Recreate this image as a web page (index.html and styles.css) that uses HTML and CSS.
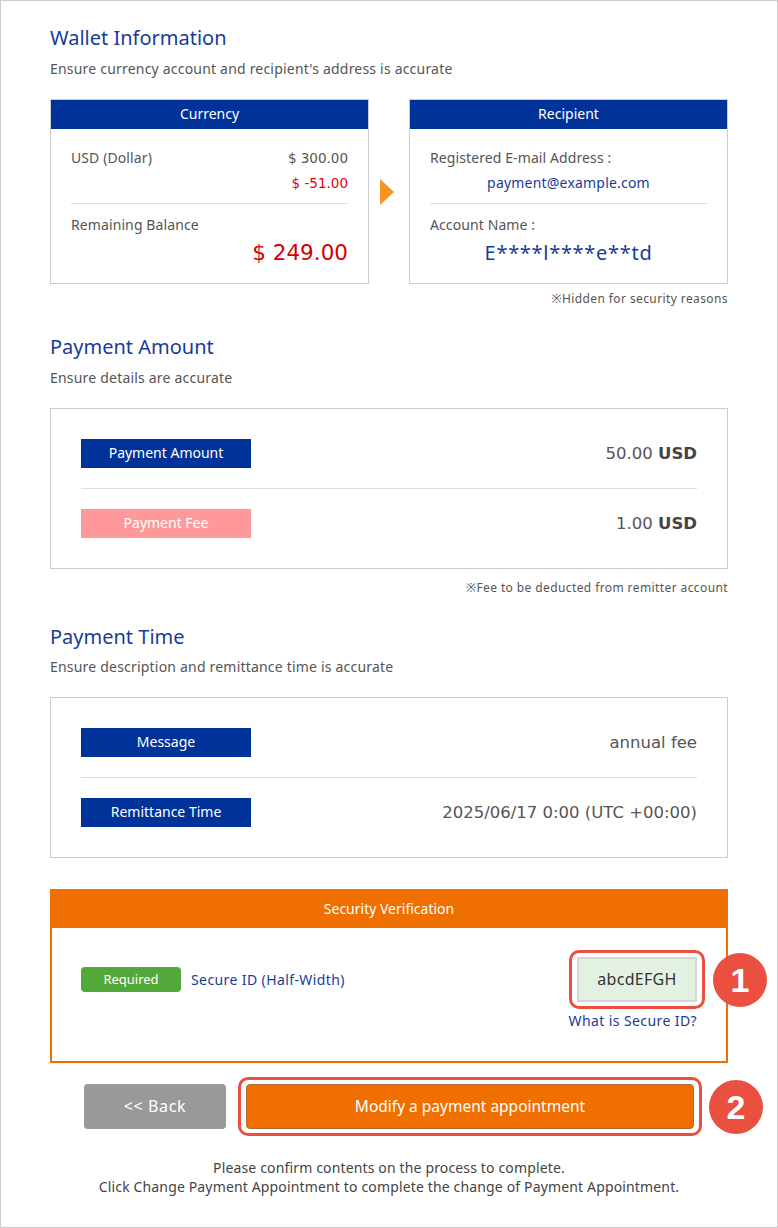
FILE: index.html
```html
<!DOCTYPE html>
<html>
<head>
<meta charset="utf-8">
<title>Payment confirmation</title>
<link rel="stylesheet" href="styles.css">
</head>
<body>
<div class="page">

	<h2 class="title">Wallet Information</h2>
	<p class="lead">Ensure currency account and recipient's address is accurate</p>
	<div class="wallet">
		<div class="card">
			<div class="card-head">Currency</div>
			<div class="card-body">
				<div class="line"><span>USD (Dollar)</span><span class="num-text">$ 300.00</span></div>
				<div class="line minus"><span></span><span class="num-text">$ -51.00</span></div>
				<div class="sep"></div>
				<div class="label">Remaining Balance</div>
				<div class="balance num-text">$ 249.00</div>
			</div>
		</div>
		<div class="arrow"></div>
		<div class="card">
			<div class="card-head">Recipient</div>
			<div class="card-body">
				<div class="label">Registered E-mail Address :</div>
				<div class="mail">payment@example.com</div>
				<div class="sep"></div>
				<div class="label">Account Name :</div>
				<div class="holder">E****l****e**td</div>
			</div>
		</div>
	</div>
	<p class="note note-wallet">※Hidden for security reasons</p>

	<h2 class="title">Payment Amount</h2>
	<p class="lead">Ensure details are accurate</p>
	<div class="box">
		<div class="row"><span class="tag">Payment Amount</span><span class="val">50.00 <b>USD</b></span></div>
		<div class="row"><span class="tag tag-fee">Payment Fee</span><span class="val">1.00 <b>USD</b></span></div>
	</div>
	<p class="note">※Fee to be deducted from remitter account</p>

	<h2 class="title title-time">Payment Time</h2>
	<p class="lead lead-time">Ensure description and remittance time is accurate</p>
	<div class="box">
		<div class="row"><span class="tag">Message</span><span class="val">annual fee</span></div>
		<div class="row"><span class="tag">Remittance Time</span><span class="val">2025/06/17 0:00 (UTC +00:00)</span></div>
	</div>

	<div class="secure">
		<div class="secure-head">Security Verification</div>
		<div class="secure-body">
			<div class="secure-left">
				<span class="required">Required</span>
				<span class="secure-label">Secure ID (Half-Width)</span>
			</div>
			<div class="secure-right">
				<div class="mark">
					<div class="code">abcdEFGH</div>
					<span class="num num-1">1</span>
				</div>
				<a class="help" href="#">What is Secure ID?</a>
			</div>
		</div>
	</div>

	<div class="actions">
		<a class="btn btn-back" href="#">&lt;&lt; Back</a>
		<div class="mark mark-btn">
			<a class="btn btn-go" href="#">Modify a payment appointment</a>
			<span class="num num-2">2</span>
		</div>
	</div>

	<p class="foot">Please confirm contents on the process to complete.<br>Click Change Payment Appointment to complete the change of Payment Appointment.</p>

</div>
</body>
</html>
```
FILE: styles.css
```css
body { margin:0; background:#fff; font-family:"Noto Sans", "Noto Sans CJK JP", sans-serif; color:#555; }
.page { width:778px; height:1228px; box-sizing:border-box; border:1px solid #ccc; padding:23px 49px 0; }
p { margin:0; }
a { text-decoration:none; }

.title { margin:0; font-size:20px; line-height:28px; font-weight:normal; color:#173c98; }
.lead { margin-top:7px; font-size:14px; line-height:20px; color:#555; letter-spacing:0.2px; }
.title-time { margin-top:27px; }
.lead-time { margin-top:6px; }

.wallet { display:flex; align-items:center; margin-top:20px; }
.card { width:319px; box-sizing:border-box; border:1px solid #ccc; }
.card-head { height:29px; line-height:28px; background:#003399; color:#fff; font-size:14px; text-align:center; }
.card-body { padding:19px 20px 16px; font-size:14px; line-height:20px; letter-spacing:0.1px; }
.num-text { font-family:"DejaVu Sans", sans-serif; font-size:13.5px; letter-spacing:0; }
.line { display:flex; justify-content:space-between; }
.minus { margin-top:5px; color:#e60012; }
.sep { margin-top:10px; border-top:1px solid #ddd; }
.sep + .label { margin-top:11px; }
.balance { margin-top:4px; font-size:21.5px; line-height:28px; color:#d40000; text-align:right; }
.mail { margin-top:5px; text-align:center; color:#173c98; letter-spacing:0.2px; }
.holder { margin-top:4px; font-size:20px; line-height:28px; text-align:center; color:#173c98; letter-spacing:0.7px; }
.arrow { flex:1; display:flex; justify-content:center; }
.arrow::before { content:""; border-left:14px solid #f7931e; border-top:13px solid transparent; border-bottom:13px solid transparent; margin-left:-5px; }

.note { font-size:12px; line-height:16px; text-align:right; color:#555; margin-top:11px; letter-spacing:0.4px; }
.note-wallet { margin-top:7px; margin-bottom:26px; }

.box { margin-top:20px; border:1px solid #ccc; padding:30px; }
.row { display:flex; justify-content:space-between; align-items:center; }
.row + .row { margin-top:20px; padding-top:20px; border-top:1px solid #ddd; }
.tag { width:170px; height:29px; line-height:28px; background:#003399; color:#fff; font-size:14px; text-align:center; }
.tag-fee { background:#ff9999; }
.val { font-family:"DejaVu Sans", sans-serif; font-size:16.5px; color:#555; }
.val b { color:#444; }

.secure { margin-top:31px; border:2px solid #ef7000; }
.secure-head { height:37px; line-height:35px; background:#ef7000; color:#fff; font-size:14px; text-align:center; }
.secure-body { display:flex; justify-content:space-between; padding:29px 29px 30px 29px; }
.secure-left { display:flex; align-items:center; height:45px; }
.required { width:100px; height:25px; line-height:25px; border-radius:4px; background:#52a838; color:#fff; font-size:13px; text-align:center; }
.secure-label { margin-left:10px; font-size:14px; color:#173c98; letter-spacing:0.4px; }
.secure-right { display:flex; flex-direction:column; align-items:flex-end; }
.mark { position:relative; }
.mark::before { content:""; position:absolute; left:-8px; right:-8px; top:-7px; bottom:-7px; border:3px solid #e9503f; border-radius:10px; }
.code { position:relative; width:120px; height:45px; box-sizing:border-box; border:2px solid #d6d6d6; background:#e3f1e3; font-size:16px; line-height:41px; text-align:center; color:#333; letter-spacing:0.3px; }
.help { margin-top:9px; font-size:14px; line-height:20px; color:#173c98; letter-spacing:0.4px; }
.num { position:absolute; width:54px; height:54px; border-radius:50%; background:#e9503f; color:#fff; font-size:34px; font-weight:bold; line-height:54px; text-align:center; font-family:"Liberation Sans", sans-serif; }
.num-1 { left:136px; top:-4px; }
.num-2 { left:463px; top:-4px; }

.actions { display:flex; justify-content:center; gap:20px; margin-top:21px; }
.btn { display:block; height:45px; line-height:45px; border-radius:4px; color:#fff; font-size:16px; text-align:center; }
.btn-back { width:142px; background:#999; letter-spacing:0.6px; }
.btn-go { position:relative; width:448px; box-sizing:border-box; border:1px solid #b06a2a; background:#ef7000; line-height:43px; font-size:15.5px; }

.foot { margin-top:29px; font-size:14px; line-height:19px; text-align:center; color:#444; letter-spacing:0.15px; }
```
